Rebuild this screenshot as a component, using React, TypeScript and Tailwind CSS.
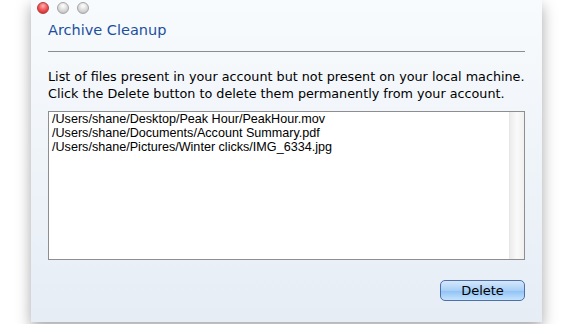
const files = [
  "/Users/shane/Desktop/Peak Hour/PeakHour.mov",
  "/Users/shane/Documents/Account Summary.pdf",
  "/Users/shane/Pictures/Winter clicks/IMG_6334.jpg",
];

function Light({ color }: { color: "red" | "grey" }) {
  return color === "red" ? (
    <span className="h-[12px] w-[12px] rounded-full border border-[#b23a3a] bg-[radial-gradient(circle_at_50%_30%,#ffb3b3_0%,#f25c5c_45%,#c81e1e_100%)]" />
  ) : (
    <span className="h-[12px] w-[12px] rounded-full border border-[#a5a5a5] bg-[radial-gradient(circle_at_50%_30%,#ffffff_0%,#dcdcdc_50%,#b4b4b4_100%)]" />
  );
}

export default function App() {
  return (
    <div className="h-[324px] w-[574px] overflow-hidden bg-white">
      <div className="ml-[31px] flex h-[322px] w-[511px] flex-col bg-gradient-to-b from-[#f8fbfd] to-[#e6edf5] shadow-[0_6px_14px_rgba(0,0,0,0.35)]">
        <div className="flex items-center gap-[8px] pl-[6px] pt-[2px]">
          <Light color="red" />
          <Light color="grey" />
          <Light color="grey" />
        </div>
        <div className="px-[17px]">
          <h1 className="mt-[6px] text-[14.5px] leading-[20px] text-[#1b4f9e] [font-family:'DejaVu_Sans',sans-serif]">
            Archive Cleanup
          </h1>
          <div className="mt-[11px] h-px bg-[#8d8d8d]" />
          <p className="mt-[16px] whitespace-nowrap text-[12.75px] leading-[17px] text-black [font-family:'DejaVu_Sans',sans-serif]">
            List of files present in your account but not present on your local machine.
            <br />
            Click the Delete button to delete them permanently from your account.
          </p>
          <div className="mt-[9px] flex h-[149px] border border-[#8e8e8e] bg-white">
            <ul className="flex-1 pl-[3px] text-[12.6px] leading-[14px] text-black [font-family:'Liberation_Sans',Arial,sans-serif]">
              {files.map((f) => (
                <li key={f}>{f}</li>
              ))}
            </ul>
            <div className="w-[15px] border-l border-[#e6e6e6] bg-gradient-to-r from-[#ececec] via-[#fafafa] to-[#f0f0f0]" />
          </div>
          <div className="mt-[20px] flex justify-end">
            <button className="h-[21px] w-[85px] rounded-[5px] border border-[#4f6fa8] bg-[linear-gradient(to_bottom,#d5e7fb_0%,#a8cff6_50%,#8ec1f4_51%,#c4e3fd_100%)] text-[13px] leading-[19px] text-black [font-family:'DejaVu_Sans',sans-serif]">
              Delete
            </button>
          </div>
        </div>
      </div>
    </div>
  );
}
